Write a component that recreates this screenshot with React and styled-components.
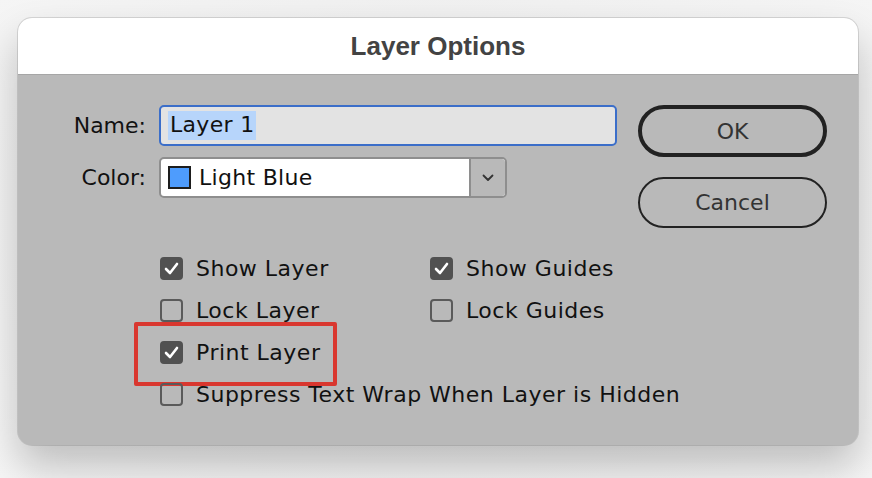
import React from 'react';
import styled, { createGlobalStyle } from 'styled-components';

const GlobalStyle = createGlobalStyle`
  html, body {
    margin: 0;
    padding: 0;
    background: #f3f3f3;
  }
  body {
    font-family: "DejaVu Sans", "Noto Sans", sans-serif;
  }
`;

const Page = styled.div`
  width: 872px;
  height: 478px;
  padding: 18px 14px 0 18px;
  box-sizing: border-box;
  background: radial-gradient(ellipse at 50% 45%, #e6e6e6 0%, #f1f1f1 60%, #f6f6f6 100%);
`;

const Dialog = styled.div`
  width: 840px;
  height: 427px;
  border-radius: 14px;
  overflow: hidden;
  background: #b9b9b9;
  box-shadow: 0 0 0 1px rgba(0, 0, 0, 0.12), 0 22px 40px rgba(0, 0, 0, 0.22);
  display: flex;
  flex-direction: column;
`;

const TitleBar = styled.div`
  height: 56px;
  background: #ffffff;
  border-bottom: 1px solid #a6a6a6;
  display: flex;
  align-items: center;
  justify-content: center;
  font-family: "Liberation Sans", Arial, sans-serif;
  font-weight: 700;
  font-size: 26px;
  color: #434343;
`;

const Body = styled.div`
  padding: 30px 31px 0 40px;
  display: flex;
  flex-direction: column;
`;

const TopRow = styled.div`
  display: flex;
  align-items: flex-start;
  justify-content: space-between;
`;

const FormGrid = styled.div`
  display: grid;
  grid-template-columns: 88px auto;
  column-gap: 13px;
  row-gap: 11px;
  align-items: center;
`;

const Label = styled.label`
  text-align: right;
  font-size: 22px;
  color: #111;
`;

const TextInput = styled.div`
  width: 458px;
  height: 41px;
  box-sizing: border-box;
  border: 2px solid #3b6ec9;
  border-radius: 5px;
  background: #e3e3e3;
  display: flex;
  align-items: center;
  padding-left: 7px;
`;

const Selected = styled.span`
  background: #b7d5fb;
  font-size: 22px;
  color: #111;
  padding: 2px 2px 3px 2px;
  line-height: 24px;
  letter-spacing: 0.3px;
`;

const Select = styled.div`
  width: 348px;
  height: 41px;
  box-sizing: border-box;
  border: 2px solid #8e8e8e;
  border-radius: 5px;
  background: #ffffff;
  display: flex;
  overflow: hidden;
`;

const SelectValue = styled.div`
  flex: 1;
  display: flex;
  align-items: center;
  gap: 8px;
  padding-left: 7px;
  font-size: 22px;
  color: #111;
  letter-spacing: 0.3px;
`;

const Swatch = styled.span`
  width: 23px;
  height: 23px;
  box-sizing: border-box;
  border: 2px solid #1d1d1d;
  background: ${({ color }) => color};
`;

const Arrow = styled.div`
  width: 34px;
  background: #b9b9b9;
  border-left: 2px solid #8e8e8e;
  display: flex;
  align-items: center;
  justify-content: center;
`;

const Buttons = styled.div`
  display: flex;
  flex-direction: column;
  gap: 20px;
`;

const Button = styled.button`
  width: 189px;
  height: ${({ primary }) => (primary ? '52px' : '51px')};
  box-sizing: border-box;
  border: ${({ primary }) => (primary ? '4px' : '2px')} solid #222;
  border-radius: 26px;
  background: transparent;
  font-family: "DejaVu Sans", sans-serif;
  font-size: 22px;
  color: #333;
  padding: 0;
`;

const Checks = styled.div`
  margin-top: 29px;
  margin-left: 102px;
  display: grid;
  grid-template-columns: 270px auto;
  row-gap: 19px;
`;

const CheckItem = styled.div`
  position: relative;
  display: flex;
  align-items: center;
  gap: 13px;
  height: 23px;
  font-size: 22px;
  letter-spacing: 0.5px;
  color: #111;
  white-space: nowrap;
  grid-column: ${({ wide }) => (wide ? '1 / span 2' : 'auto')};
`;

const Box = styled.span`
  width: 23px;
  height: 23px;
  box-sizing: border-box;
  border-radius: 4px;
  flex-shrink: 0;
  display: flex;
  align-items: center;
  justify-content: center;
  background: ${({ checked }) => (checked ? '#515151' : 'transparent')};
  border: 2px solid ${({ checked }) => (checked ? '#515151' : '#5a5a5a')};
`;

const Highlight = styled.span`
  position: absolute;
  left: -26px;
  top: -19px;
  width: 203px;
  height: 64px;
  box-sizing: border-box;
  border: 4px solid #d9372f;
  border-radius: 2px;
  pointer-events: none;
`;

const Check = () => (
  <svg width="15" height="13" viewBox="0 0 15 13">
    <path d="M2 7 L6 11 L13 2" fill="none" stroke="#fff" strokeWidth="2.6" strokeLinecap="round" strokeLinejoin="round" />
  </svg>
);

const Option = ({ checked, label, wide, marked }) => (
  <CheckItem wide={wide}>
    {marked && <Highlight />}
    <Box checked={checked}>{checked && <Check />}</Box>
    {label}
  </CheckItem>
);

export default function App() {
  return (
    <>
      <GlobalStyle />
      <Page>
        <Dialog>
          <TitleBar>Layer Options</TitleBar>
          <Body>
            <TopRow>
              <FormGrid>
                <Label>Name:</Label>
                <TextInput>
                  <Selected>Layer 1</Selected>
                </TextInput>
                <Label>Color:</Label>
                <Select>
                  <SelectValue>
                    <Swatch color="#4e9cfd" />
                    Light Blue
                  </SelectValue>
                  <Arrow>
                    <svg width="12" height="8" viewBox="0 0 12 8">
                      <path d="M1.5 1.5 L6 6 L10.5 1.5" fill="none" stroke="#333" strokeWidth="1.8" strokeLinecap="round" strokeLinejoin="round" />
                    </svg>
                  </Arrow>
                </Select>
              </FormGrid>
              <Buttons>
                <Button primary>OK</Button>
                <Button>Cancel</Button>
              </Buttons>
            </TopRow>
            <Checks>
              <Option checked label="Show Layer" />
              <Option checked label="Show Guides" />
              <Option label="Lock Layer" />
              <Option label="Lock Guides" />
              <Option checked label="Print Layer" marked wide />
              <Option label="Suppress Text Wrap When Layer is Hidden" wide />
            </Checks>
          </Body>
        </Dialog>
      </Page>
    </>
  );
}
